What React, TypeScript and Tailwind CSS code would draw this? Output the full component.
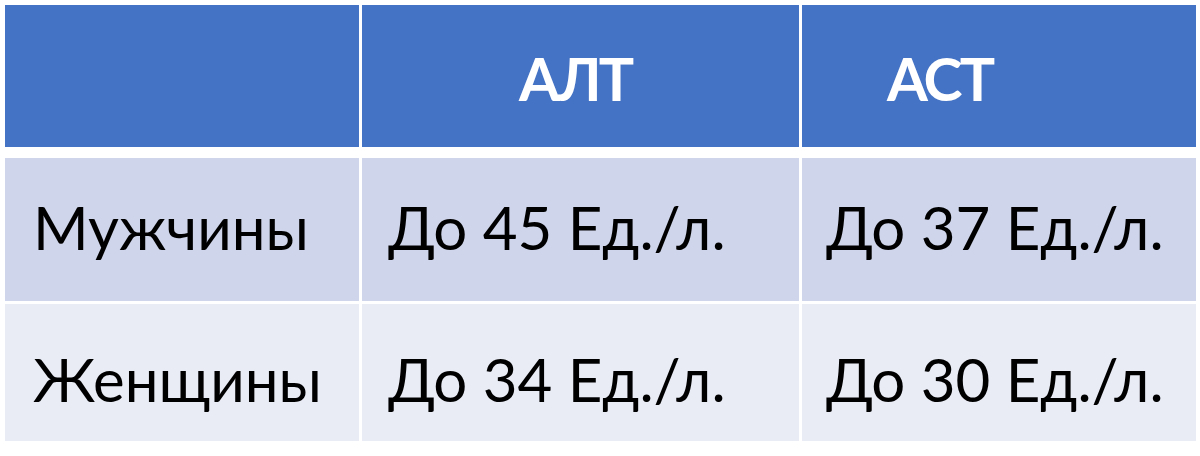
const rows = [
  { label: 'Мужчины', alt: 'До 45 Ед./л.', ast: 'До 37 Ед./л.', bg: 'bg-[#cfd5ea]', h: 'h-[143px]', pad: 'pb-[6px]' },
  { label: 'Женщины', alt: 'До 34 Ед./л.', ast: 'До 30 Ед./л.', bg: 'bg-[#e9ebf5]', h: 'h-[137px]', pad: 'pt-[12px]' },
]

export default function App() {
  return (
    <div className="w-[1200px] h-[456px] bg-white p-[5px] font-['Lato','Noto_Sans',sans-serif] text-black">
      {/* Header */}
      <div className="grid grid-cols-[354px_437px_394px] gap-x-[3px] h-[142px] mb-[11px]">
        <div className="bg-[#4472c4]" />
        <div className="bg-[#4472c4] flex items-center pl-[157px] pt-[4px] text-white font-bold text-[59px] leading-none tracking-[-3px]">АЛТ</div>
        <div className="bg-[#4472c4] flex items-center pl-[85px] pt-[4px] text-white font-bold text-[59px] leading-none tracking-[-3px]">АСТ</div>
      </div>

      {/* Body */}
      <div className="flex flex-col gap-y-[3px]">
        {rows.map((r) => (
          <div key={r.label} className={`grid grid-cols-[354px_437px_394px] gap-x-[3px] ${r.h}`}>
            <div className={`${r.bg} ${r.pad} flex items-center pl-[28px] text-[60px] leading-none`}>{r.label}</div>
            <div className={`${r.bg} ${r.pad} flex items-center pl-[26px] text-[60px] leading-none`}>{r.alt}</div>
            <div className={`${r.bg} ${r.pad} flex items-center pl-[24px] text-[60px] leading-none`}>{r.ast}</div>
          </div>
        ))}
      </div>
    </div>
  )
}
